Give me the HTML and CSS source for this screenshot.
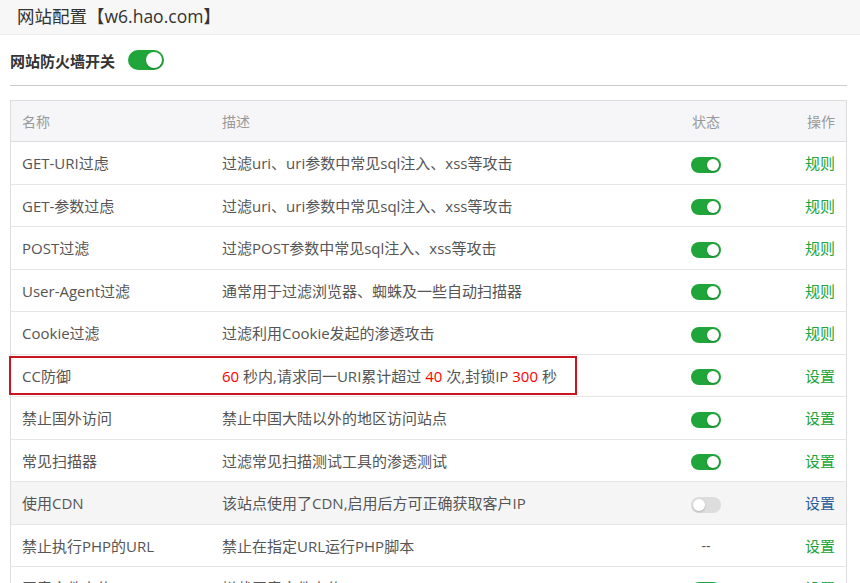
FILE: index.html
```html
<!DOCTYPE html>
<html lang="zh-CN">
<head>
  <meta charset="UTF-8">
  <title>网站配置</title>
  <link rel="stylesheet" href="styles.css">
</head>
<body>

  <div class="title-bar">网站配置【w6.hao.com】</div>

  <div class="content">
    <div class="fw-switch">
      <span class="fw-label">网站防火墙开关</span>
      <span class="toggle toggle-lg on"></span>
    </div>

    <table class="rules">
      <thead>
        <tr>
          <th class="col-name">名称</th>
          <th class="col-desc">描述</th>
          <th class="col-state">状态</th>
          <th class="col-op">操作</th>
        </tr>
      </thead>
      <tbody>
        <tr>
          <td>GET-URI过虑</td>
          <td>过滤uri、uri参数中常见sql注入、xss等攻击</td>
          <td class="col-state"><span class="toggle on"></span></td>
          <td class="col-op"><a href="#">规则</a></td>
        </tr>
        <tr>
          <td>GET-参数过虑</td>
          <td>过滤uri、uri参数中常见sql注入、xss等攻击</td>
          <td class="col-state"><span class="toggle on"></span></td>
          <td class="col-op"><a href="#">规则</a></td>
        </tr>
        <tr>
          <td>POST过滤</td>
          <td>过滤POST参数中常见sql注入、xss等攻击</td>
          <td class="col-state"><span class="toggle on"></span></td>
          <td class="col-op"><a href="#">规则</a></td>
        </tr>
        <tr>
          <td>User-Agent过滤</td>
          <td>通常用于过滤浏览器、蜘蛛及一些自动扫描器</td>
          <td class="col-state"><span class="toggle on"></span></td>
          <td class="col-op"><a href="#">规则</a></td>
        </tr>
        <tr>
          <td>Cookie过滤</td>
          <td>过滤利用Cookie发起的渗透攻击</td>
          <td class="col-state"><span class="toggle on"></span></td>
          <td class="col-op"><a href="#">规则</a></td>
        </tr>
        <tr class="marked">
          <td>CC防御</td>
          <td><span class="num">60</span> 秒内,请求同一URI累计超过 <span class="num">40</span> 次,封锁IP <span class="num">300</span> 秒</td>
          <td class="col-state"><span class="toggle on"></span></td>
          <td class="col-op"><a href="#">设置</a></td>
        </tr>
        <tr>
          <td>禁止国外访问</td>
          <td>禁止中国大陆以外的地区访问站点</td>
          <td class="col-state"><span class="toggle on"></span></td>
          <td class="col-op"><a href="#">设置</a></td>
        </tr>
        <tr>
          <td>常见扫描器</td>
          <td>过滤常见扫描测试工具的渗透测试</td>
          <td class="col-state"><span class="toggle on"></span></td>
          <td class="col-op"><a href="#">设置</a></td>
        </tr>
        <tr class="hover">
          <td>使用CDN</td>
          <td>该站点使用了CDN,启用后方可正确获取客户IP</td>
          <td class="col-state"><span class="toggle"></span></td>
          <td class="col-op"><a href="#">设置</a></td>
        </tr>
        <tr>
          <td>禁止执行PHP的URL</td>
          <td>禁止在指定URL运行PHP脚本</td>
          <td class="col-state"><span class="dash">--</span></td>
          <td class="col-op"><a href="#">设置</a></td>
        </tr>
        <tr>
          <td>恶意文件上传</td>
          <td>拦截恶意文件上传</td>
          <td class="col-state"><span class="toggle on"></span></td>
          <td class="col-op"><a href="#">设置</a></td>
        </tr>
      </tbody>
    </table>
  </div>

</body>
</html>
```

FILE: styles.css
```css
body {
  margin: 0;
  font-family: "Open Sans", "Noto Sans CJK SC", sans-serif;
  font-size: 15px;
  color: #555;
  background: #fff;
}
.title-bar {
  height: 35px;
  line-height: 33px;
  padding-left: 17px;
  font-size: 17.5px;
  color: #333;
  background: #f7f7f7;
  border-bottom: 1px solid #ececec;
  box-sizing: border-box;
}
.content {
  padding: 0 13px 0 10px;
}
.fw-switch {
  display: flex;
  align-items: center;
  height: 50px;
  border-bottom: 1px solid #ccc;
  margin-bottom: 14px;
}
.fw-label {
  font-weight: bold;
  color: #333;
  margin-right: 13px;
}

/* switches */
.toggle {
  display: inline-block;
  position: relative;
  width: 30px;
  height: 16px;
  border-radius: 8px;
  background: #ddd;
  vertical-align: middle;
}
.toggle::after {
  content: "";
  position: absolute;
  top: 2px;
  left: 2px;
  width: 12px;
  height: 12px;
  border-radius: 50%;
  background: #fff;
  box-shadow: 0 1px 2px rgba(0,0,0,.2);
}
.toggle.on {
  background: #20a53a;
}
.toggle.on::after {
  left: auto;
  right: 2px;
}
.toggle-lg {
  width: 36px;
  height: 20px;
  border-radius: 10px;
}
.toggle-lg::after {
  width: 16px;
  height: 16px;
}

/* table */
.rules {
  width: 100%;
  border-collapse: collapse;
  border: 1px solid #ddd;
}
.rules th {
  height: 40px;
  text-align: left;
  font-size: 14px;
  font-weight: normal;
  color: #999;
  background: #f6f6f8;
  padding: 0 11px;
  border-bottom: 1px solid #ddd;
}
.rules td {
  height: 41.5px;
  padding: 0 11px;
  border-bottom: 1px solid #e6e6e6;
}
.rules .col-name {
  width: 178px;
}
.rules .col-state {
  width: 94px;
  text-align: center;
}
.rules .col-op {
  width: 60px;
  text-align: right;
}
.rules a {
  color: #20a53a;
  text-decoration: none;
}
.rules tr.hover td {
  background: #f5f5f5;
}
.rules tr.hover a {
  color: #2c5d9b;
}
.rules .num {
  color: #f00;
}
.rules .dash {
  color: #555;
  font-size: 14px;
}
.rules tr.marked td:first-child {
  position: relative;
}
.rules tr.marked td:first-child::before {
  content: "";
  position: absolute;
  left: -2px;
  top: 1px;
  width: 564px;
  height: 35px;
  border: 2px solid #c9151e;
}
```
